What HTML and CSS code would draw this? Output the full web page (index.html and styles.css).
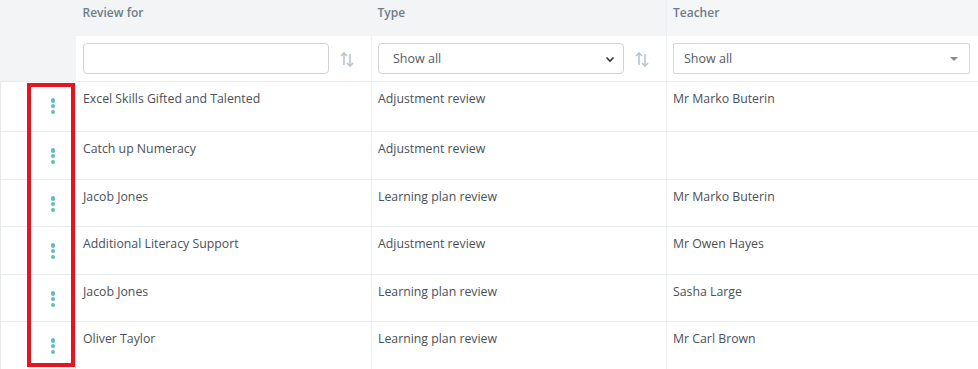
FILE: index.html
```html
<!DOCTYPE html>
<html>
<head>
<meta charset="utf-8">
<link rel="stylesheet" href="styles.css">
</head>
<body>
<div class="wrap">
<table class="grid">
  <colgroup>
    <col class="c0"><col class="c1"><col class="c2"><col class="c3">
  </colgroup>
  <thead>
    <tr class="head">
      <th class="gutter"></th>
      <th class="hc first">Review for</th>
      <th class="hc">Type</th>
      <th class="hc last">Teacher</th>
    </tr>
    <tr class="filters">
      <td class="gutter"></td>
      <td class="fc first">
        <div class="fcell">
          <input class="txt" type="text">
          <svg class="sort" width="14" height="18" viewBox="0 0 14 18"><path d="M4 15V3M1 6l3-3 3 3" fill="none" stroke="#b9c5cd" stroke-width="1.6"/><path d="M10 4v12M7 13l3 3 3-3" fill="none" stroke="#b9c5cd" stroke-width="1.6"/></svg>
        </div>
      </td>
      <td class="fc">
        <div class="fcell">
          <div class="sel type">
            <span>Show all</span>
            <svg class="chev" width="10" height="7" viewBox="0 0 10 7"><path d="M1.5 1.5l3.5 3.5 3.5-3.5" fill="none" stroke="#333" stroke-width="1.6"/></svg>
          </div>
          <svg class="sort" width="14" height="18" viewBox="0 0 14 18"><path d="M4 15V3M1 6l3-3 3 3" fill="none" stroke="#b9c5cd" stroke-width="1.6"/><path d="M10 4v12M7 13l3 3 3-3" fill="none" stroke="#b9c5cd" stroke-width="1.6"/></svg>
        </div>
      </td>
      <td class="fc last">
        <div class="fcell">
          <div class="sel teacher">
            <span>Show all</span>
            <svg class="tri" width="8" height="5" viewBox="0 0 8 5"><path d="M0 0h8L4 4z" fill="#888"/></svg>
          </div>
        </div>
      </td>
    </tr>
  </thead>
  <tbody>
    <tr class="row h50"><td class="gutter act"><span class="dots"><i></i><i></i><i></i></span></td><td class="dc first">Excel Skills Gifted and Talented</td><td class="dc">Adjustment review</td><td class="dc last">Mr Marko Buterin</td></tr>
    <tr class="row h48"><td class="gutter act"><span class="dots"><i></i><i></i><i></i></span></td><td class="dc first">Catch up Numeracy</td><td class="dc">Adjustment review</td><td class="dc last"></td></tr>
    <tr class="row h47"><td class="gutter act"><span class="dots"><i></i><i></i><i></i></span></td><td class="dc first">Jacob Jones</td><td class="dc">Learning plan review</td><td class="dc last">Mr Marko Buterin</td></tr>
    <tr class="row h48"><td class="gutter act"><span class="dots"><i></i><i></i><i></i></span></td><td class="dc first">Additional Literacy Support</td><td class="dc">Adjustment review</td><td class="dc last">Mr Owen Hayes</td></tr>
    <tr class="row h47"><td class="gutter act"><span class="dots"><i></i><i></i><i></i></span></td><td class="dc first">Jacob Jones</td><td class="dc">Learning plan review</td><td class="dc last">Sasha Large</td></tr>
    <tr class="row h48"><td class="gutter act"><span class="dots"><i></i><i></i><i></i></span></td><td class="dc first">Oliver Taylor</td><td class="dc">Learning plan review</td><td class="dc last">Mr Carl Brown</td></tr>
  </tbody>
</table>
<div class="highlight"></div>
</div>
</body>
</html>
```

FILE: styles.css
```css
html, body {
  margin: 0;
  padding: 0;
  background: #ffffff;
}
body {
  font-family: "Open Sans", "Liberation Sans", sans-serif;
  color: #4b5057;
  overflow: hidden;
}
.wrap {
  position: relative;
  width: 978px;
  height: 369px;
  overflow: hidden;
}
.grid {
  border-collapse: collapse;
  table-layout: fixed;
  width: 1000px;
}
.c0 { width: 75px; }
.c1 { width: 296px; }
.c2 { width: 295px; }
.c3 { width: 334px; }

.gutter {
  padding: 0;
  border-left: 1px solid #e6eaed;
}

/* header row */
.hc {
  height: 36px;
  box-sizing: border-box;
  background: #f2f4f6;
  font-size: 12px;
  font-weight: 600;
  color: #6e7d89;
  text-align: left;
  vertical-align: top;
  padding: 6px 0 0 6px;
  line-height: 14px;
}
.hc.first { padding-left: 7px; }
.hc.last {
  background: #f4f6f8;
  border-left: 1px solid #eceff1;
}
.head .gutter {
  background: #f2f4f6;
  border-left-color: #f2f4f6;
}

/* filter row */
.filters .gutter {
  height: 45px;
  background: #f2f4f6;
  border-left-color: #f2f4f6;
  border-bottom: 1px solid #e8ecef;
}
.fc {
  height: 45px;
  box-sizing: border-box;
  vertical-align: middle;
  padding: 0 0 0 6px;
  border-bottom: 1px solid #e8ecef;
  border-left: 1px solid #f0f2f4;
}
.fc.first {
  padding-left: 7px;
  border-left: none;
}
.fcell {
  display: flex;
  align-items: center;
  gap: 10px;
}
.txt {
  width: 246px;
  height: 31px;
  box-sizing: border-box;
  border: 1px solid #cfd3d6;
  border-radius: 4px;
  margin: 0;
  padding: 0 8px;
  font-family: inherit;
}
.sort {
  display: block;
  margin-left: 1px;
  margin-top: 1px;
}
.sel {
  position: relative;
  display: flex;
  align-items: center;
  box-sizing: border-box;
  height: 31px;
  border: 1px solid #cfd3d6;
  background: #fff;
  font-size: 12.5px;
  color: #555a60;
}
.sel.type {
  width: 246px;
  border-radius: 4px;
  padding-left: 14px;
}
.sel.teacher {
  width: 297px;
  border-radius: 2px;
  padding-left: 10px;
  border-color: #d5d8db;
}
.chev {
  position: absolute;
  right: 8px;
  top: 12px;
}
.tri {
  position: absolute;
  right: 11px;
  top: 13px;
}

/* data rows */
.row.h50 > td { height: 50px; }
.row.h48 > td { height: 48px; }
.row.h47 > td { height: 47px; }
.dc {
  box-sizing: border-box;
  vertical-align: top;
  text-align: left;
  padding: 7.5px 0 0 6px;
  border-bottom: 1px solid #e8ecef;
  border-left: 1px solid #edf0f2;
  font-size: 12.3px;
  line-height: 18px;
  color: #4b5057;
}
.dc.first {
  padding-left: 7px;
}
.act {
  box-sizing: border-box;
  vertical-align: top;
  border-bottom: 1px solid #e8ecef;
  padding: 16px 0 0 0;
}
.dots {
  display: flex;
  flex-direction: column;
  gap: 1.3px;
  margin-left: 49.5px;
  width: 5px;
}
.dots i {
  display: block;
  width: 4.6px;
  height: 4.6px;
  border-radius: 50%;
  background: #5fbfb6;
}
.highlight {
  position: absolute;
  left: 27px;
  top: 83px;
  width: 48px;
  height: 284px;
  box-sizing: border-box;
  border: 4px solid #e5141f;
}
```
